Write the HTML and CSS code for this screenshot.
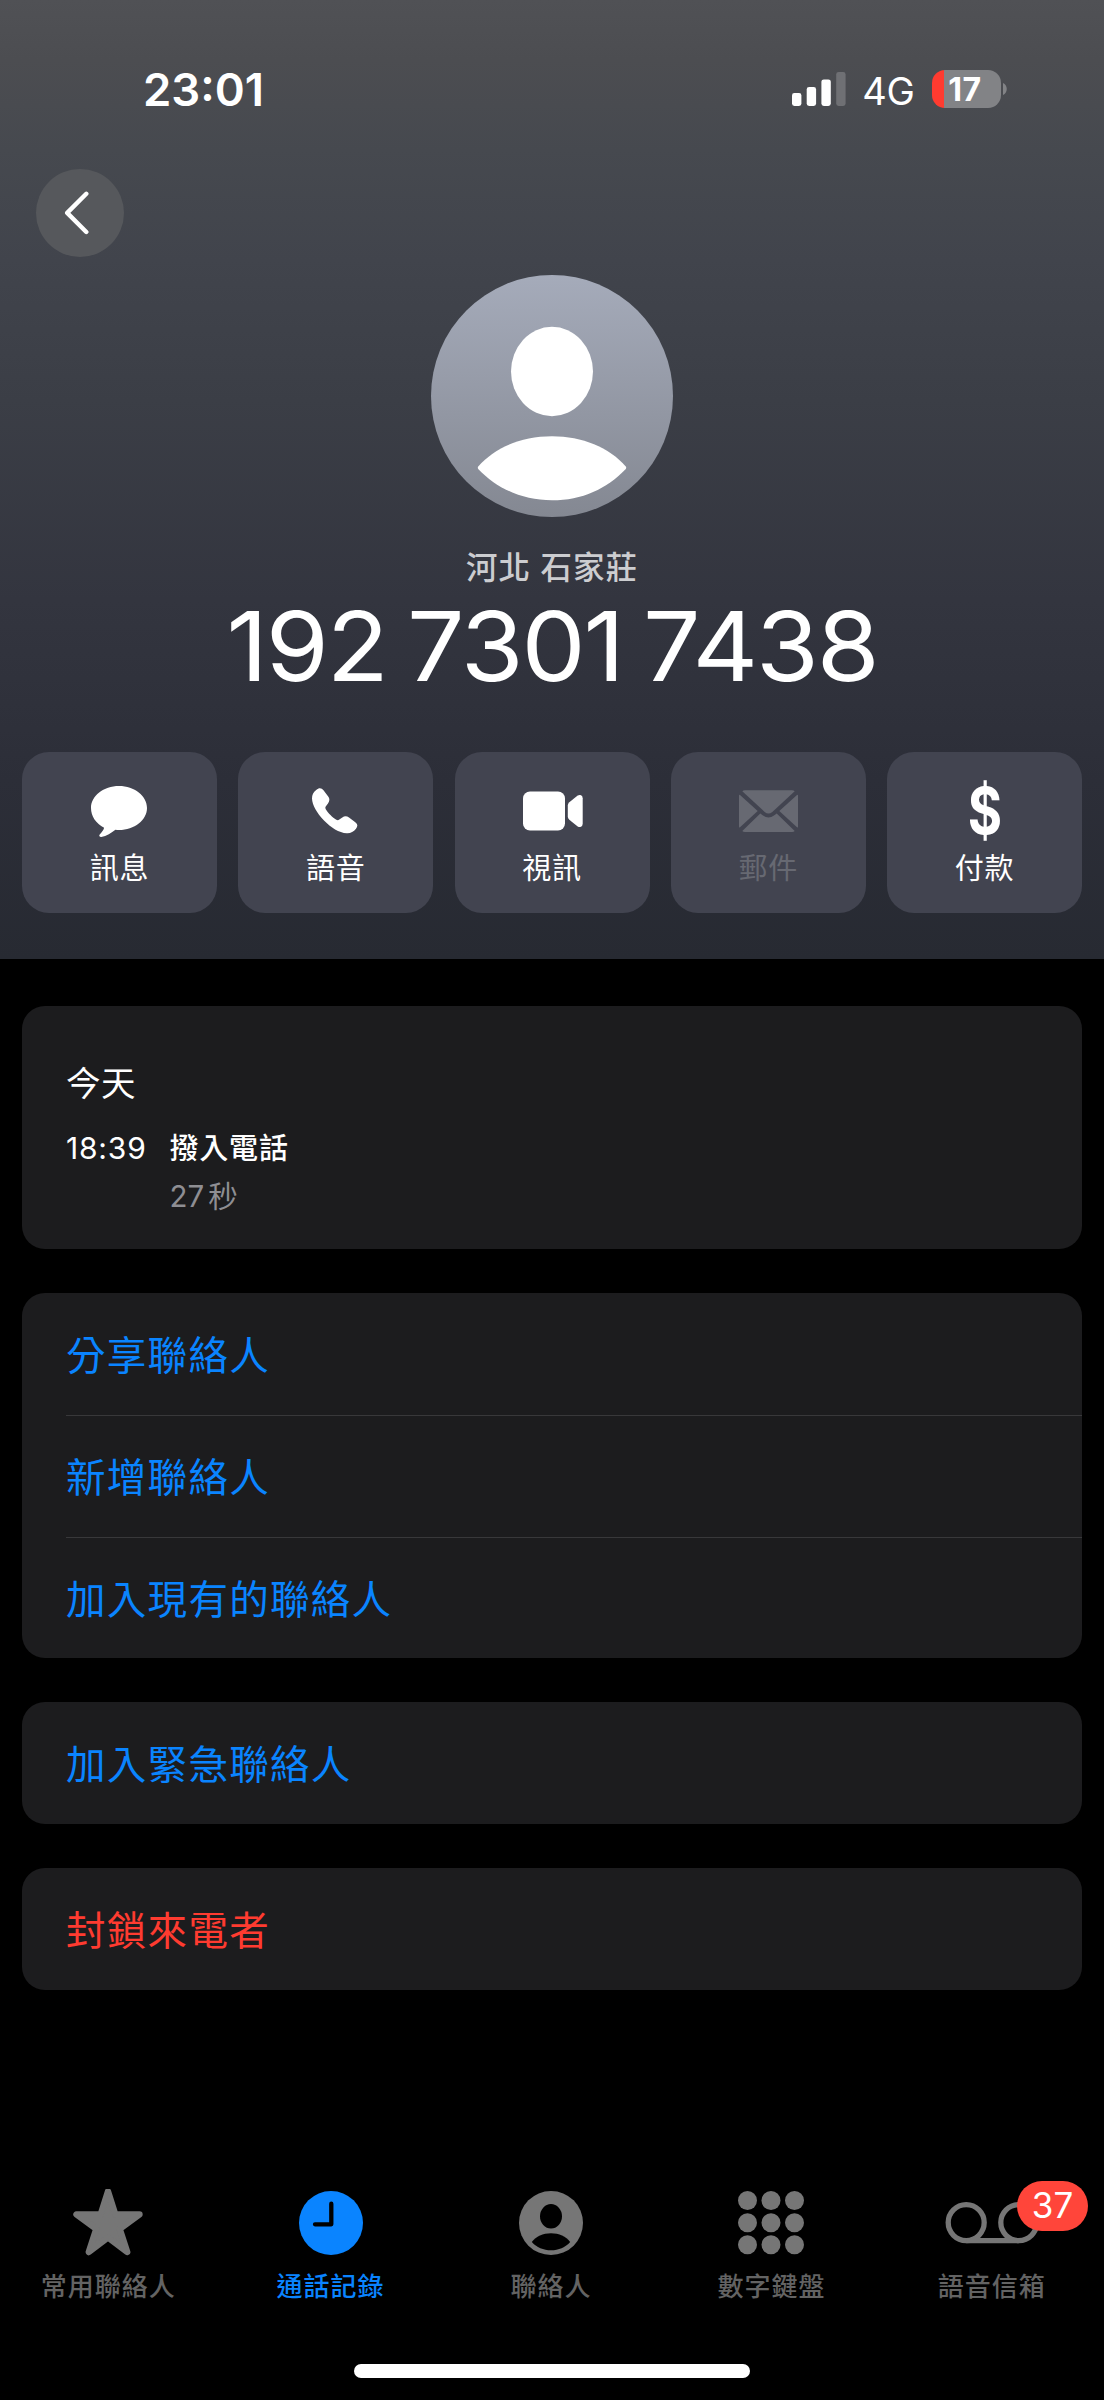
FILE: index.html
```html
<!DOCTYPE html>
<html lang="zh-Hant">
<head>
<meta charset="utf-8">
<title>通話記錄</title>
<link rel="stylesheet" href="styles.css">
</head>
<body>
<div class="phone">
  <header class="hero">
    <div class="status">
      <time class="clock">23:01</time>
      <div class="indicators">
        <svg class="signal" width="54" height="34" viewBox="0 0 54 34" fill="#fff">
          <rect x="0" y="21" width="9.4" height="13" rx="2.4"/>
          <rect x="14.7" y="15" width="9.4" height="19" rx="2.4"/>
          <rect x="29.4" y="7.4" width="9.4" height="26.6" rx="2.4"/>
          <rect x="44.2" y="0" width="9.4" height="34" rx="2.4" fill="#6f7074"/>
        </svg>
        <span class="network">4G</span>
        <div class="battery"><span class="battery-level">17</span></div>
        <svg class="battery-nub" width="4" height="12" viewBox="0 0 4 12"><path d="M0 0C5 2 5 10 0 12Z" fill="#828386"/></svg>
      </div>
    </div>
    <button class="back" aria-label="返回">
      <svg width="26" height="44" viewBox="0 0 26 44" fill="none" stroke="#fff" stroke-width="4.4" stroke-linecap="round" stroke-linejoin="round"><path d="M22.3 2.8 3.2 21.9 22.3 41"/></svg>
    </button>
    <svg class="avatar" width="242" height="242" viewBox="0 0 242 242">
      <defs><linearGradient id="avatar-fill" x1="0" y1="0" x2="0" y2="1"><stop offset="0" stop-color="#a5abba"/><stop offset="1" stop-color="#848892"/></linearGradient></defs>
      <circle cx="121" cy="121" r="121" fill="url(#avatar-fill)"/>
      <ellipse cx="121" cy="96.5" rx="41" ry="44.7" fill="#fff"/>
      <path d="M47.2 191.5C64 172.500 90.500 161.300 121 161.300S178 172.500 194.800 191.500Q195.600 192.700 194.800 193.900C176 213.500 151 225.300 121 225.300S66 213.500 47.200 193.900Q46.400 192.700 47.200 191.500Z" fill="#fff"/>
    </svg>
    <p class="region">河北 石家莊</p>
    <h1 class="number">192 7301 7438</h1>
    <div class="actions">
      <button class="action">
        <span class="glyph"><svg width="56" height="51" viewBox="0 0 56 51"><path fill="#fff" d="M28 0C43.500 0 56 9.800 56 22S43.500 44 28 44c-1.300 0-2.400 0-3.600-.2C20.500 47 15.500 50.200 10.300 50.900c-2 .2-2.600-1.300-1.400-2.700 1.800-2.200 3.800-4.200 4.200-6.500C5 37.500 0 30.500 0 22 0 9.800 12.500 0 28 0z"/></svg></span>
        <span>訊息</span>
      </button>
      <button class="action">
        <span class="glyph"><svg width="46" height="46" viewBox="0 0 46 46"><path fill="#fff" d="M4.200 2C7-.6 9.600-.2 11.500 2.300L16.200 8.600C18 11 17.600 13.200 16 15.400L13.900 18.200C13.100 19.400 13.200 20.300 13.900 21.500 16 25 20.500 29.500 24.300 31.800 25.500 32.500 26.300 32.400 27.300 31.600L30.300 29.400C32.500 27.900 34.700 27.900 37 29.500L43 33.900C45.800 36 46 38 44 40.800 41.500 44 38.500 45.400 34.800 45.200 27 45 19 39.500 12 32.500 5 25.500.2 17 0 10.600 0 7 1.200 4.400 4.200 2Z"/></svg></span>
        <span>語音</span>
      </button>
      <button class="action">
        <span class="glyph"><svg class="video" width="60" height="40" viewBox="0 0 60 40" fill="#fff"><rect x="0" y="0.500" width="42" height="39" rx="7"/><path d="M44.800 14.500Q44.800 12.500 46.300 11.200L54.700 4.600Q56 3.700 57.400 4 59.700 4.500 59.700 7.200V32.800Q59.700 35.500 57.400 36 56 36.300 54.700 35.400L46.300 28.800Q44.800 27.500 44.800 25.500Z"/></svg></span>
        <span>視訊</span>
      </button>
      <button class="action action-off">
        <span class="glyph"><svg width="59" height="42" viewBox="0 0 59 42" fill="#676972"><path d="M3.300 1.300Q4.200.3 6 .3H53Q54.800.3 55.700 1.300L33.300 22Q29.500 25.200 25.700 22Z"/><path d="M0 5.500Q0 4.200 1 5L18.700 20.900 1 37.300Q0 38 0 36.500Z"/><path d="M59 5.500Q59 4.200 58 5L40.300 20.900 58 37.300Q59 38 59 36.500Z"/><path d="M3.300 40.900 21.300 23.500 24 25.600Q29.500 29.500 35 25.600L37.700 23.500 55.700 40.900Q54.800 42 53 42H6Q4.200 42 3.300 40.900Z"/></svg></span>
        <span>郵件</span>
      </button>
      <button class="action">
        <span class="glyph dollar">$</span>
        <span>付款</span>
      </button>
    </div>
  </header>

  <main class="content">
    <section class="card log">
      <h2 class="day">今天</h2>
      <div class="call">
        <time>18:39</time>
        <div>
          <p class="call-type">撥入電話</p>
          <p class="duration">27<span>秒</span></p>
        </div>
      </div>
    </section>
    <section class="card">
      <a class="row">分享聯絡人</a>
      <a class="row">新增聯絡人</a>
      <a class="row">加入現有的聯絡人</a>
    </section>
    <section class="card"><a class="row">加入緊急聯絡人</a></section>
    <section class="card"><a class="row row-danger">封鎖來電者</a></section>
  </main>

  <nav class="tabs">
    <a class="tab">
      <svg width="70" height="68" viewBox="0 0 70 68"><path fill="#767676" stroke="#767676" stroke-width="6.400" stroke-linejoin="round" d="M35 2.400 42.300 25.400H66.500L46.700 40 54.200 63 35 48.500 15.800 63 23.300 40 3.500 25.400H27.700Z"/></svg>
      <span>常用聯絡人</span>
    </a>
    <a class="tab tab-active">
      <svg width="64" height="66" viewBox="0 0 64 66"><circle cx="32" cy="33" r="32" fill="#0a84ff"/><path d="M32.300 13.700V34.300H16" fill="none" stroke="#000" stroke-width="4.300" stroke-linecap="round" stroke-linejoin="round"/></svg>
      <span>通話記錄</span>
    </a>
    <a class="tab">
      <svg width="64" height="66" viewBox="0 0 64 66"><circle cx="32" cy="33" r="32" fill="#767676"/><ellipse cx="32" cy="26.300" rx="11" ry="12.200"/><path d="M12.800 52C17 46.500 24 43.200 32 43.200S47 46.500 51.200 52C46.500 57.500 39.500 60.300 32 60.300S17.500 57.500 12.800 52Z"/></svg>
      <span>聯絡人</span>
    </a>
    <a class="tab">
      <svg width="66" height="66" viewBox="0 0 66 66" fill="#767676"><circle cx="9.500" cy="10.500" r="9.500"/><circle cx="33" cy="10.500" r="9.500"/><circle cx="56.500" cy="10.500" r="9.500"/><circle cx="9.500" cy="32.700" r="9.500"/><circle cx="33" cy="32.700" r="9.500"/><circle cx="56.500" cy="32.700" r="9.500"/><circle cx="9.500" cy="54.700" r="9.500"/><circle cx="33" cy="54.700" r="9.500"/><circle cx="56.500" cy="54.700" r="9.500"/></svg>
      <span>數字鍵盤</span>
    </a>
    <a class="tab">
      <svg width="94" height="66" viewBox="0 0 94 66" fill="none" stroke="#767676" stroke-width="5.300"><circle cx="21.200" cy="32.600" r="18"/><circle cx="73.800" cy="32.600" r="18"/><path d="M21.200 50.600H73.800"/></svg>
      <span>語音信箱</span>
      <b class="badge">37</b>
    </a>
  </nav>
  <div class="home-indicator"></div>
</div>
</body>
</html>
```
FILE: styles.css
```css
* {
  box-sizing: border-box;
  margin: 0;
  padding: 0;
}

body {
  background: #000;
  color: #fff;
  font-family: Inter, "Noto Sans CJK TC", sans-serif;
}

svg {
  display: block;
}

button {
  border: 0;
  background: none;
  color: inherit;
  font: inherit;
}

.phone {
  display: flex;
  flex-direction: column;
  width: 1104px;
  height: 2400px;
  overflow: hidden;
}

.hero {
  display: flex;
  flex-direction: column;
  align-items: center;
  height: 959px;
  padding: 64px 22px 0;
  background: linear-gradient(#505155 0, #4c4d51 60px, #46494f 150px, #41444c 260px, #3b3e46 400px, #33353f 600px, #2c2e38 780px, #272a32 959px);
}

.status {
  display: flex;
  justify-content: space-between;
  align-items: center;
  width: 100%;
  height: 50px;
  padding: 0 75px 0 121px;
}

.clock {
  padding-top: 2px;
  font-size: 45.500px;
  font-weight: 600;
  line-height: 50px;
  letter-spacing: 0;
}

.indicators {
  display: flex;
  align-items: center;
}

.network {
  margin: 3px 17.500px 0 16.500px;
  font-size: 38px;
  font-weight: 400;
  line-height: 46px;
  letter-spacing: -0.300px;
}

.battery {
  width: 68.500px;
  height: 38px;
  border-radius: 13px;
  background: linear-gradient(90deg, #ff3b30 12px, #828386 12px);
}

.battery-level {
  display: block;
  width: 66px;
  font-size: 32px;
  font-weight: 700;
  line-height: 39px;
  letter-spacing: 0.500px;
  text-align: center;
}

.battery-nub {
  margin-left: 2.500px;
}

.back {
  display: flex;
  align-items: center;
  align-self: flex-start;
  width: 88px;
  height: 88px;
  margin: 55px 0 18px 14px;
  padding-left: 28px;
  border-radius: 50%;
  background: #56585c;
}

.region {
  margin-top: 28px;
  color: #cccdd0;
  font-size: 31.500px;
  font-weight: 500;
  line-height: 46px;
  letter-spacing: 1px;
}

.number {
  height: 110px;
  font-size: 96px;
  font-weight: 400;
  line-height: 110px;
  letter-spacing: -2px;
  white-space: nowrap;
  word-spacing: -6px;
  transform: scaleX(1.060);
}

.actions {
  display: grid;
  grid-template-columns: repeat(5, 195px);
  justify-content: space-between;
  width: 100%;
  margin-top: 51px;
}

.action {
  display: flex;
  flex-direction: column;
  align-items: center;
  height: 160.500px;
  padding-top: 26px;
  border-radius: 27px;
  background: #424450;
  font-size: 29px;
  line-height: 40px;
  letter-spacing: 0.800px;
}

.action-off {
  color: #676972;
}

.glyph {
  display: flex;
  align-items: center;
  justify-content: center;
  height: 66px;
  margin-bottom: 4.500px;
}

.glyph svg {
  margin-right: 1.500px;
}

.glyph .video {
  margin: 0 0 0 2px;
}

.action-off .glyph svg {
  margin-right: 0;
}

.dollar {
  font-size: 64px;
  font-weight: 700;
  letter-spacing: 0;
  transform: scaleX(0.820);
}

.content {
  display: flex;
  flex-direction: column;
  gap: 44px;
  padding: 47px 22px 0;
}

.card {
  border-radius: 23px;
  background: #1c1c1e;
}

.log {
  height: 243.300px;
  padding: 53px 44px 0;
}

.day {
  font-size: 34.500px;
  font-weight: 400;
  line-height: 50px;
  letter-spacing: 0.500px;
}

.call {
  display: flex;
  gap: 25px;
  margin-top: 15px;
  font-size: 30px;
  line-height: 48px;
}

.call time {
  width: 78.500px;
  letter-spacing: 0.800px;
}

.call-type {
  padding-top: 1px;
  font-size: 29px;
  font-weight: 500;
  line-height: 48px;
  letter-spacing: 0.800px;
}

.duration {
  display: flex;
  gap: 4px;
  color: #8e8e93;
  font-size: 29.500px;
  line-height: 47px;
}

.row {
  display: block;
  height: 121.670px;
  margin-left: 44px;
  color: #0a84ff;
  font-size: 39.500px;
  line-height: 126px;
  letter-spacing: 1.300px;
}

.row + .row {
  border-top: 1px solid #38383a;
  line-height: 124px;
}

.row-danger {
  color: #ff3b30;
}

.tabs {
  display: grid;
  grid-template-columns: repeat(5, 1fr);
  margin-top: auto;
  padding-right: 2px;
}

.tab {
  position: relative;
  display: flex;
  flex-direction: column;
  align-items: center;
  color: #636363;
  font-size: 26px;
  font-weight: 500;
  line-height: 38px;
  letter-spacing: 1px;
}

.tab:first-child {
  padding-right: 4px;
}

.tab svg {
  height: 68px;
  margin-bottom: 11px;
}

.tab-active {
  color: #0a84ff;
}

.badge {
  position: absolute;
  top: -8px;
  right: 14px;
  width: 71px;
  height: 49.500px;
  border-radius: 25px;
  background: #ff453a;
  color: #fff;
  font-size: 35px;
  font-weight: 400;
  line-height: 49px;
  letter-spacing: 0;
  text-align: center;
}

.home-indicator {
  width: 396px;
  height: 14px;
  margin: 58px auto 22px;
  border-radius: 7px;
  background: #fff;
}
```
